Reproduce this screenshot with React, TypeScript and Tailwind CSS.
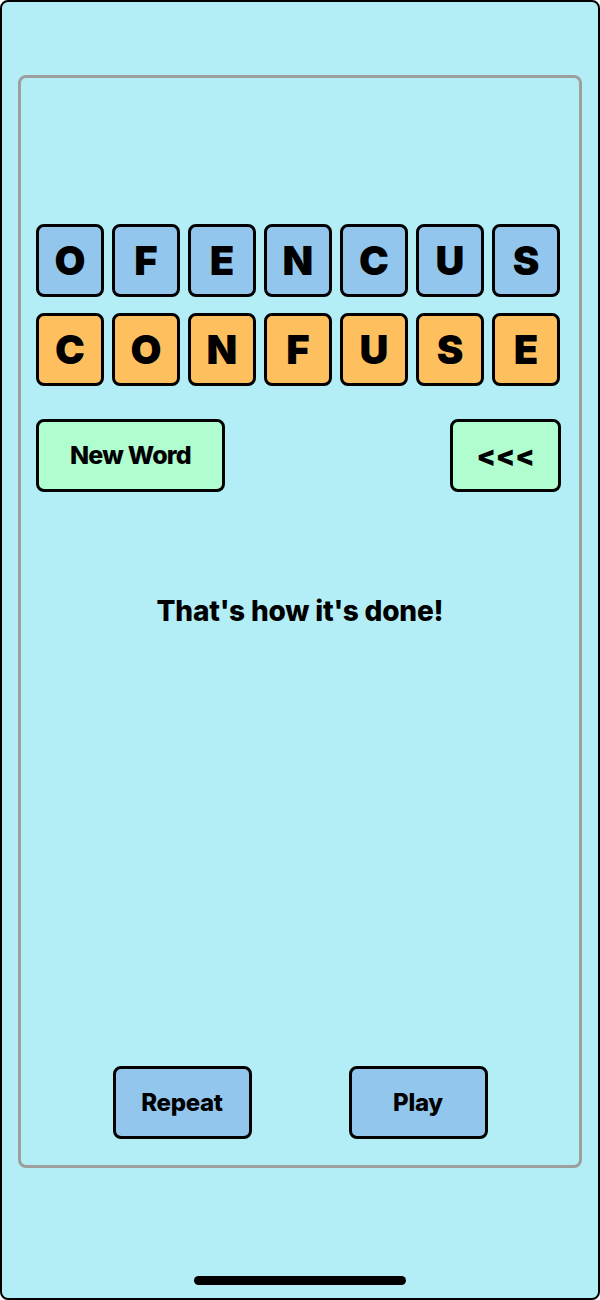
const scrambled = ["O", "F", "E", "N", "C", "U", "S"];
const answer = ["C", "O", "N", "F", "U", "S", "E"];

function Tile({ letter, color }: { letter: string; color: string }) {
  return (
    <div
      className={`w-[68px] h-[73px] ${color} border-[3px] border-black rounded-[8px] flex items-center justify-center text-[40px] font-black leading-none`}
    >
      {letter}
    </div>
  );
}

export default function App() {
  return (
    <div
      className="h-[1300px] w-full bg-[#b3eef7] border-2 border-black rounded-[8px] flex flex-col items-stretch px-4 pt-[73px] text-black"
      style={{ fontFamily: "Inter, 'Noto Sans', sans-serif" }}
    >
      <div className="h-[1093px] border-[3px] border-[#9e9e9e] rounded-[8px] flex flex-col px-[15px] pt-[146px] pb-[26px]">
        <div className="flex gap-2">
          {scrambled.map((l, i) => (
            <Tile key={`s${i}`} letter={l} color="bg-[#93c6ec]" />
          ))}
        </div>
        <div className="flex gap-2 mt-4">
          {answer.map((l, i) => (
            <Tile key={`a${i}`} letter={l} color="bg-[#fec05f]" />
          ))}
        </div>
        <div className="flex justify-between mt-[33px] w-[525px]">
          <button className="w-[189px] h-[73px] bg-[#b0fdd0] border-[3px] border-black rounded-[8px] text-[25px] font-extrabold tracking-[-0.8px]">
            New Word
          </button>
          <button className="w-[111px] h-[73px] bg-[#b0fdd0] border-[3px] border-black rounded-[8px] text-[28px] font-black">
            &lt;&lt;&lt;
          </button>
        </div>
        <div className="mt-[103px] text-center text-[28px] font-extrabold leading-8 tracking-[-0.2px]">
          That's how it's done!
        </div>
        <div className="flex-1" />
        <div className="flex justify-center gap-[97px]">
          <button className="w-[139px] h-[73px] bg-[#93c6ec] border-[3px] border-black rounded-[8px] text-[24px] font-extrabold tracking-[-0.3px]">
            Repeat
          </button>
          <button className="w-[139px] h-[73px] bg-[#93c6ec] border-[3px] border-black rounded-[8px] text-[24px] font-extrabold tracking-[-0.3px]">
            Play
          </button>
        </div>
      </div>
      <div className="mt-[108px] self-center w-[212px] h-[9px] rounded-full bg-black" />
    </div>
  );
}
